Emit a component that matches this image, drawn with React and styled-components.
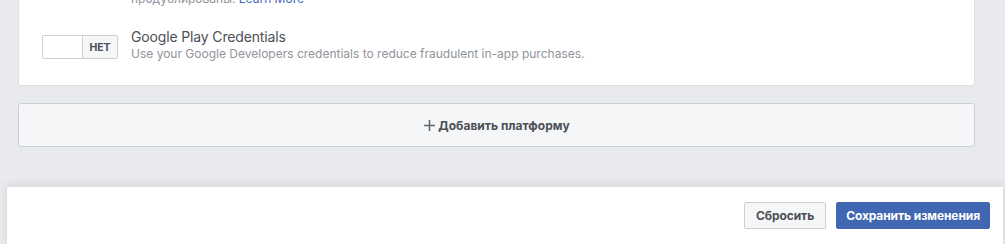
import React from "react";
import styled, { createGlobalStyle } from "styled-components";

const GlobalStyle = createGlobalStyle`
  html, body {
    margin: 0;
    padding: 0;
    background: #e9eaed;
    overflow: hidden;
  }
  body {
    font-family: Inter, "Liberation Sans", Arial, sans-serif;
    -webkit-font-smoothing: antialiased;
  }
`;

const Page = styled.div`
  width: 1005px;
  height: 244px;
  display: flex;
  flex-direction: column;
  overflow: hidden;
`;

const Content = styled.div`
  display: flex;
  flex-direction: column;
  gap: 17px;
  padding: 0 30px 0 18px;
  margin-top: -9px;
`;

const Card = styled.div`
  background: #fff;
  border: 1px solid #dddfe2;
  border-top: none;
  border-radius: 0 0 3px 3px;
  padding: 0 24px 23px 23px;
  display: flex;
  flex-direction: column;
  gap: 21px;
`;

const PrevText = styled.div`
  padding-left: 89px;
  font-size: 12px;
  line-height: 16px;
  color: #90949c;
`;

const Link = styled.a`
  color: #4267b2;
  text-decoration: none;
`;

const Row = styled.div`
  display: flex;
  align-items: flex-start;
  gap: 13px;
`;

const Toggle = styled.div`
  display: flex;
  width: 76px;
  height: 24px;
  margin-top: 7px;
  border: 1px solid #ccd0d5;
  border-radius: 2px;
  box-sizing: border-box;
  overflow: hidden;
  flex-shrink: 0;
`;

const ToggleKnob = styled.div`
  width: 39px;
  background: #fff;
  border-right: 1px solid #ccd0d5;
`;

const ToggleLabel = styled.div`
  flex: 1;
  background: #f5f6f7;
  color: #4b4f56;
  font-size: 10.5px;
  font-weight: 700;
  display: flex;
  align-items: center;
  justify-content: center;
`;

const RowText = styled.div`
  display: flex;
  flex-direction: column;
`;

const Title = styled.div`
  font-size: 14px;
  line-height: 18px;
  letter-spacing: -0.15px;
  color: #4b4f56;
`;

const Desc = styled.div`
  font-size: 12px;
  line-height: 16px;
  color: #90949c;
`;

const AddPlatform = styled.button`
  height: 44px;
  background: #f5f6f7;
  border: 1px solid #ccd0d5;
  border-radius: 3px;
  display: flex;
  align-items: center;
  justify-content: center;
  gap: 2px;
  font-family: inherit;
  font-size: 12px;
  font-weight: 700;
  color: #4b4f56;
  cursor: pointer;
  padding: 0;
`;

const Footer = styled.div`
  margin: 40px 1px 0 6px;
  height: 57px;
  background: #fff;
  border: 1px solid #dddfe2;
  border-top: none;
  box-shadow: 0 -3px 8px rgba(0, 0, 0, 0.07);
  display: flex;
  align-items: center;
  justify-content: flex-end;
  gap: 10px;
  padding-right: 13px;
  flex-shrink: 0;
`;

const Button = styled.button`
  height: 27px;
  padding: 0 ${(p) => (p.$primary ? "9px" : "11px")};
  border-radius: 2px;
  border: 1px solid ${(p) => (p.$primary ? "#4267b2" : "#ccd0d5")};
  background: ${(p) => (p.$primary ? "#4267b2" : "#f5f6f7")};
  color: ${(p) => (p.$primary ? "#fff" : "#4b4f56")};
  font-family: inherit;
  font-size: 12px;
  font-weight: 700;
  letter-spacing: -0.1px;
  cursor: pointer;
`;

function PlusIcon() {
  return (
    <svg width="13" height="13" viewBox="0 0 13 13">
      <path d="M6.5 1v11M1 6.5h11" stroke="#606770" strokeWidth="1.6" />
    </svg>
  );
}

export default function App() {
  return (
    <Page>
      <GlobalStyle />
      <Content>
        <Card>
          <PrevText>
            продублированы. <Link href="#">Learn More</Link>
          </PrevText>
          <Row>
            <Toggle>
              <ToggleKnob />
              <ToggleLabel>НЕТ</ToggleLabel>
            </Toggle>
            <RowText>
              <Title>Google Play Credentials</Title>
              <Desc>
                Use your Google Developers credentials to reduce fraudulent
                in-app purchases.
              </Desc>
            </RowText>
          </Row>
        </Card>
        <AddPlatform>
          <PlusIcon />
          Добавить платформу
        </AddPlatform>
      </Content>
      <Footer>
        <Button>Сбросить</Button>
        <Button $primary>Сохранить изменения</Button>
      </Footer>
    </Page>
  );
}
